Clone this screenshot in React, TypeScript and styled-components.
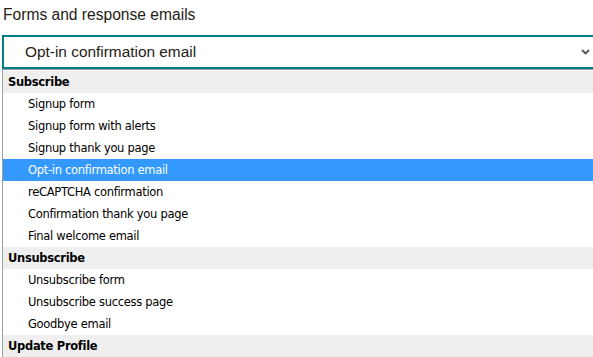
import styled, { createGlobalStyle } from "styled-components";

const GlobalStyle = createGlobalStyle`
  html, body {
    margin: 0;
    padding: 0;
    background: #ffffff;
    overflow: hidden;
  }
`;

const Page = styled.div`
  width: 610px;
  padding: 0 0 0 2px;
  font-family: "Liberation Sans", Arial, sans-serif;
`;

const Label = styled.div`
  font-family: "Liberation Sans", Arial, sans-serif;
  font-size: 15.6px;
  color: #241c15;
  height: 35px;
  line-height: 30px;
  padding-left: 1px;
`;

const SelectBox = styled.div`
  display: flex;
  align-items: center;
  justify-content: space-between;
  height: 30px;
  border: 2px solid #007c89;
  padding: 0 0 0 21px;
  font-size: 15.4px;
  color: #241c15;
  box-sizing: content-box;
`;

const Chevron = styled.svg`
  margin-right: 20px;
  width: 9px;
  height: 6px;
`;

const ListBox = styled.div`
  display: flex;
  border-top: 1px solid #a0a0a0;
  border-left: 1px solid #a0a0a0;
  padding-top: 1px;
  height: 300px;
`;

const Options = styled.div`
  flex: 1;
  display: flex;
  flex-direction: column;
`;

const Row = styled.div<{ $group?: boolean; $active?: boolean }>`
  height: 22px;
  box-sizing: border-box;
  padding-top: 1px;
  line-height: 21px;
  font-family: "DejaVu Sans", Tahoma, sans-serif;
  font-size: 11.5px;
  letter-spacing: -0.3px;
  white-space: nowrap;
  padding-left: ${(p) => (p.$group ? "5px" : "25px")};
  font-weight: ${(p) => (p.$group ? 700 : 400)};
  background: ${(p) => (p.$active ? "#3399ff" : p.$group ? "#efefef" : "#ffffff")};
  color: ${(p) => (p.$active ? "#ffffff" : "#000000")};
`;

const Scrollbar = styled.div`
  width: 17px;
  background: #f0f0f0;
  display: flex;
  flex-direction: column;
  padding-left: 1px;
`;

const Thumb = styled.div`
  margin-top: 18px;
  flex: 1;
  background: #cdcdcd;
`;

type Item = { label: string; group?: boolean; active?: boolean };

const items: Item[] = [
  { label: "Subscribe", group: true },
  { label: "Signup form" },
  { label: "Signup form with alerts" },
  { label: "Signup thank you page" },
  { label: "Opt-in confirmation email", active: true },
  { label: "reCAPTCHA confirmation" },
  { label: "Confirmation thank you page" },
  { label: "Final welcome email" },
  { label: "Unsubscribe", group: true },
  { label: "Unsubscribe form" },
  { label: "Unsubscribe success page" },
  { label: "Goodbye email" },
  { label: "Update Profile", group: true },
];

function App() {
  return (
    <Page>
      <GlobalStyle />
      <Label>Forms and response emails</Label>
      <SelectBox>
        <span>Opt-in confirmation email</span>
        <Chevron viewBox="0 0 9 6">
          <path d="M1 1 L4.5 4.5 L8 1" fill="none" stroke="#555" strokeWidth="1.8" />
        </Chevron>
      </SelectBox>
      <ListBox>
        <Options>
          {items.map((it) => (
            <Row key={it.label} $group={it.group} $active={it.active}>
              {it.label}
            </Row>
          ))}
        </Options>
        <Scrollbar>
          <Thumb />
        </Scrollbar>
      </ListBox>
    </Page>
  );
}

export default App;
